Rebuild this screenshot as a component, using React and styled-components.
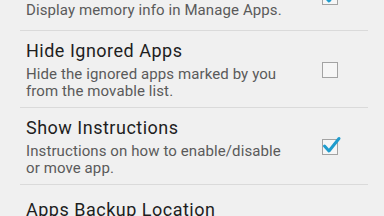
import React from 'react';
import styled, { createGlobalStyle } from 'styled-components';

const GlobalStyle = createGlobalStyle`
  html, body {
    margin: 0;
    padding: 0;
    background: #f0f0f0;
    overflow: hidden;
  }
  body {
    font-family: Roboto, "Liberation Sans", sans-serif;
  }
`;

const Screen = styled.div`
  width: 384px;
  height: 216px;
  overflow: hidden;
  background: #f0f0f0;
`;

// the list is scrolled: the first row sits partly above the top edge
const List = styled.ul`
  list-style: none;
  margin: -38px 16px 0 20px;
  padding: 0;
`;

const Row = styled.li`
  display: flex;
  align-items: center;
  min-height: 52px;
  padding: 9px 0 7px 6px;
  border-top: ${(p) => (p.$first ? 'none' : '1px solid #dadada')};
`;

const Texts = styled.div`
  width: 262px;
  flex: none;
`;

const Title = styled.div`
  font-size: 18px;
  line-height: 22px;
  letter-spacing: 0.5px;
  color: #1e1e1e;
  white-space: nowrap;
`;

const Summary = styled.div`
  margin-top: 4px;
  font-size: 15px;
  line-height: 17px;
  letter-spacing: 0.1px;
  color: #5a5a5a;
`;

const Box = styled.span`
  position: relative;
  flex: none;
  width: 14px;
  height: 14px;
  margin-left: 34px;
  border: 1.5px solid #a3a3a3;
  background: #f6f6f6;
`;

const Tick = styled.svg`
  position: absolute;
  left: -1.5px;
  top: -4.5px;
  width: 20px;
  height: 20px;
`;

const CheckBox = ({ checked }) => (
  <Box>
    {checked && (
      <Tick viewBox="0 0 20 20">
        <path
          d="M2.5 10 L7 15 L17 2.5"
          fill="none"
          stroke="#1f9ccd"
          strokeWidth="3"
          strokeLinecap="round"
          strokeLinejoin="round"
        />
      </Tick>
    )}
  </Box>
);

const prefs = [
  {
    title: 'Show Memory Info',
    summary: 'Display memory info in Manage Apps.',
    checked: true,
  },
  {
    title: 'Hide Ignored Apps',
    summary: 'Hide the ignored apps marked by you from the movable list.',
    checked: false,
  },
  {
    title: 'Show Instructions',
    summary: 'Instructions on how to enable/disable or move app.',
    checked: true,
  },
  {
    title: 'Apps Backup Location',
    summary: '/mnt/sdcard/AppMgr/backup',
  },
];

export default function App() {
  return (
    <Screen>
      <GlobalStyle />
      <List>
        {prefs.map((p, i) => (
          <Row key={p.title} $first={i === 0}>
            <Texts>
              <Title>{p.title}</Title>
              <Summary>{p.summary}</Summary>
            </Texts>
            {p.checked !== undefined && <CheckBox checked={p.checked} />}
          </Row>
        ))}
      </List>
    </Screen>
  );
}
